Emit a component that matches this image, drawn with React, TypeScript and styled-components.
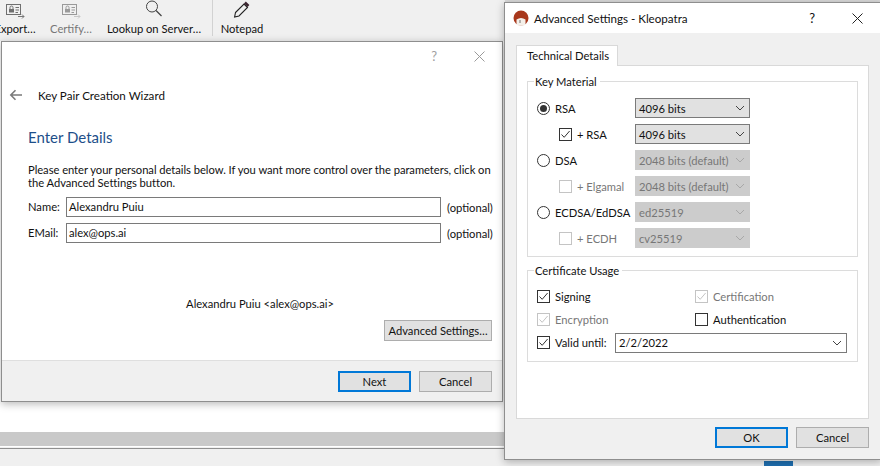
import React from 'react';
import styled, { createGlobalStyle } from 'styled-components';

const GlobalStyle = createGlobalStyle`
  html, body {
    margin: 0;
    padding: 0;
    width: 880px;
    height: 466px;
    overflow: hidden;
    background: #fff;
  }
  * { box-sizing: border-box; }
`;

const Desktop = styled.div`
  position: relative;
  width: 880px;
  height: 466px;
  overflow: hidden;
  background: #fff;
  color: #111;
  font-family: "Lato", "Open Sans", sans-serif;
  font-size: 11.2px;
`;

/* app behind the dialogs */
const Toolbar = styled.div`
  height: 41px;
  background: #f0f0f0;
  display: flex;
  align-items: flex-start;
  overflow: hidden;
`;

const ToolButton = styled.div<{ $width: number; $disabled?: boolean }>`
  width: ${(p) => p.$width}px;
  flex: none;
  display: flex;
  flex-direction: column;
  align-items: center;
  height: 37px;
  color: ${(p) => (p.$disabled ? '#777' : '#111')};
  white-space: nowrap;

  &:first-child { margin-left: -5px; }

  svg { flex: none; height: 20px; }
  span { margin-top: 1px; line-height: 15px; }
`;

const ToolSeparator = styled.div`
  width: 1px;
  height: 36px;
  flex: none;
  background: #d2d2d2;
  margin: 0 4px 0 11px;
`;

const TopEdge = styled.div`
  position: absolute;
  left: 505px;
  right: 0;
  top: 0;
  height: 3px;
  background: #d9d9d9;
`;

const StatusStrip = styled.div`
  position: absolute;
  left: 0;
  right: 0;
  top: 432px;
  height: 34px;
  background: #f0f0f0;
`;

const StatusBand = styled.div`
  height: 15px;
  background: #c9c9c9;
  border-bottom: 1px solid #fff;
`;

const StatusRule = styled.div`
  height: 1px;
  margin-top: 1px;
  background: #8f8f8f;
`;

const TaskChip = styled.div`
  position: absolute;
  left: 764px;
  top: 29px;
  width: 29px;
  height: 5px;
  background: #1f6fb0;
`;

const Window = styled.div<{ $left: number; $top: number; $width: number; $height: number }>`
  position: absolute;
  left: ${(p) => p.$left}px;
  top: ${(p) => p.$top}px;
  width: ${(p) => p.$width}px;
  height: ${(p) => p.$height}px;
  background: #fff;
  border: 1px solid #8e8e8e;
  box-shadow: 0 2px 8px rgba(0, 0, 0, 0.28);
  display: flex;
  flex-direction: column;
`;

/* wizard */
const WizardCaption = styled.div`
  height: 28px;
  display: flex;
  justify-content: flex-end;
  align-items: center;
  gap: 37px;
  padding: 0 17px 0 0;
  color: #a0a0a0;
`;

const HelpMark = styled.span`
  font-size: 13px;
  line-height: 1;
`;

const WizardHeader = styled.div`
  display: flex;
  align-items: center;
  height: 20px;
  margin-top: 15px;
  padding-left: 7px;
  gap: 15px;
  font-size: 11.6px;
`;

const WizardBody = styled.div`
  flex: 1;
  display: flex;
  flex-direction: column;
  padding: 22px 10px 0 26px;
`;

const PageTitle = styled.div`
  font-size: 15px;
  line-height: 20px;
  color: #1d4f8a;
`;

const Intro = styled.p`
  margin: 16px 0 0;
  line-height: 13px;
  letter-spacing: -0.04px;
  white-space: nowrap;
`;

const FieldGrid = styled.div`
  display: grid;
  grid-template-columns: 38px 375px auto;
  row-gap: 6px;
  align-items: center;
  margin-top: 8px;
`;

const FieldLabel = styled.span`
  line-height: 20px;
`;

const TextField = styled.div`
  height: 20px;
  border: 1px solid #7a7a7a;
  padding-left: 2px;
  line-height: 18px;
`;

const FieldHint = styled.span`
  margin-left: 6px;
`;

const Preview = styled.div`
  margin-top: 53px;
  text-align: center;
  line-height: 15px;
`;

const AdvancedRow = styled.div`
  display: flex;
  justify-content: flex-end;
  margin-top: 9px;
`;

const PushButton = styled.div<{ $width: number; $default?: boolean }>`
  width: ${(p) => p.$width}px;
  height: 21px;
  flex: none;
  display: flex;
  align-items: center;
  justify-content: center;
  background: #e1e1e1;
  border: ${(p) => (p.$default ? '2px solid #0078d7' : '1px solid #adadad')};
  white-space: nowrap;
`;

const ButtonBar = styled.div<{ $height: number; $rule?: boolean; $inset: number; $lift?: number }>`
  height: ${(p) => p.$height}px;
  flex: none;
  display: flex;
  justify-content: flex-end;
  align-items: center;
  gap: 8px;
  background: #f0f0f0;
  border-top: ${(p) => (p.$rule ? '1px solid #dfdfdf' : 'none')};
  padding: 0 ${(p) => p.$inset}px ${(p) => p.$lift ?? 0}px 0;
`;

/* advanced settings */
const TitleBar = styled.div`
  height: 30px;
  flex: none;
  display: flex;
  align-items: center;
  padding: 0 18px 0 8px;
  font-size: 11.6px;
`;

const TitleText = styled.span`
  margin-left: 5px;
  flex: 1;
`;

const TitleHelp = styled.span`
  font-size: 13px;
  margin-right: 37px;
`;

const DialogBody = styled.div`
  flex: 1;
  display: flex;
  flex-direction: column;
  background: #f0f0f0;
  padding: 12px 12px 0 11px;
`;

const Tab = styled.div`
  width: 102px;
  height: 21px;
  margin-bottom: -1px;
  position: relative;
  z-index: 1;
  background: #fff;
  border: 1px solid #d9d9d9;
  border-bottom: none;
  padding-left: 10px;
  line-height: 20px;
`;

const TabPane = styled.div`
  height: 354px;
  flex: none;
  background: #fff;
  border: 1px solid #d9d9d9;
  padding: 15px 10px 0 10px;
  display: flex;
  flex-direction: column;
  gap: 13px;
`;

const GroupBox = styled.fieldset<{ $height: number }>`
  margin: 0;
  padding: 0;
  min-width: 0;
  height: ${(p) => p.$height}px;
  flex: none;
  border: 1px solid #dcdcdc;
  position: relative;
  display: flex;
  flex-direction: column;
`;

const GroupTitle = styled.div`
  position: absolute;
  top: -7px;
  left: 6px;
  padding: 0 3px 0 1px;
  line-height: 14px;
  background: #fff;
`;

const KeyGrid = styled.div`
  display: grid;
  grid-template-columns: 98px 115px;
  grid-auto-rows: 20px;
  row-gap: 6px;
  padding: 16px 0 0 9px;
  align-items: center;
`;

const OptionLine = styled.div<{ $indent?: boolean; $disabled?: boolean }>`
  display: flex;
  align-items: center;
  padding-left: ${(p) => (p.$indent ? 22 : 0)}px;
  color: ${(p) => (p.$disabled ? '#777' : '#111')};
  white-space: nowrap;
`;

const RadioDot = styled.span<{ $checked?: boolean }>`
  width: 13px;
  height: 13px;
  flex: none;
  margin-right: 5px;
  border: 1px solid #333;
  border-radius: 50%;
  display: flex;
  align-items: center;
  justify-content: center;

  &::after {
    content: '';
    width: 7px;
    height: 7px;
    border-radius: 50%;
    background: ${(p) => (p.$checked ? '#333' : 'transparent')};
  }
`;

const CheckBox = styled.span<{ $disabled?: boolean }>`
  width: 13px;
  height: 13px;
  flex: none;
  margin-right: 5px;
  background: #fff;
  border: 1px solid ${(p) => (p.$disabled ? '#c4c4c4' : '#333')};
  display: flex;
  align-items: center;
  justify-content: center;

  svg { display: block; }
`;

const ComboBox = styled.div<{ $disabled?: boolean; $white?: boolean; $grow?: boolean }>`
  height: 20px;
  display: flex;
  align-items: center;
  justify-content: space-between;
  padding: 0 4px 0 3px;
  background: ${(p) => (p.$white ? '#fff' : p.$disabled ? '#cccccc' : '#e1e1e1')};
  border: 1px solid ${(p) => (p.$disabled ? '#cccccc' : '#7a7a7a')};
  color: ${(p) => (p.$disabled ? '#777' : '#111')};
  flex: ${(p) => (p.$grow ? 1 : 'none')};
`;

const UsageGrid = styled.div`
  display: grid;
  grid-template-columns: 158px 1fr;
  grid-auto-rows: 23px;
  padding: 14px 10px 0 9px;
  align-items: center;
`;

const ValidRow = styled.div`
  grid-column: 1 / 3;
  display: flex;
  align-items: center;
`;

const ValidLabel = styled.span`
  width: 60px;
  flex: none;
  white-space: nowrap;
`;

const Check = ({ disabled }: { disabled?: boolean }) => (
  <svg width="11" height="11" viewBox="0 0 11 11" fill="none">
    <path d="M1.5 5.5 L4.2 8.3 L9.6 2" stroke={disabled ? '#c4c4c4' : '#333'} strokeWidth="1" />
  </svg>
);

const Chevron = ({ disabled }: { disabled?: boolean }) => (
  <svg width="10" height="6" viewBox="0 0 10 6" fill="none">
    <path d="M1 1 L5 5 L9 1" stroke={disabled ? '#a8a8a8' : '#444'} strokeWidth="1" />
  </svg>
);

const CertIcon = ({ disabled }: { disabled?: boolean }) => {
  const c = disabled ? '#9a9a9a' : '#6f6f6f';
  return (
    <svg width="20" height="20" viewBox="0 0 20 20" fill="none">
      <rect x="1.5" y="4.5" width="14" height="10" stroke={c} />
      <rect x="4" y="9" width="5" height="3.5" fill={c} />
      <path d="M5 9 V7.5 a1.5 1.5 0 0 1 3 0 V9" stroke={c} />
      <path d="M10.5 7.5 H14 M10.5 10 H14 M10.5 12.5 H13" stroke={c} />
      <path d="M13 16.5 H19 M17 14.5 L19 16.5 L17 18.5" stroke={disabled ? '#c8c8c8' : '#777'} />
    </svg>
  );
};

const SearchIcon = () => (
  <svg width="20" height="20" viewBox="0 0 20 20" fill="none" stroke="#444">
    <circle cx="8" cy="6.5" r="5.5" />
    <path d="M12 10.5 L17.5 16" strokeWidth="1.2" />
  </svg>
);

const PencilIcon = () => (
  <svg width="20" height="20" viewBox="0 0 20 20" fill="none">
    <path d="M3.5 12.5 L12 4 L15.5 7.5 L7 16 L2.6 17 Z" stroke="#222" strokeWidth="1.1" />
    <path d="M12 3.6 L13.8 1.6 L17.4 5 L15.6 7 Z" fill="#3b2430" />
  </svg>
);

const BackArrow = () => (
  <svg width="14" height="12" viewBox="0 0 14 12" fill="none" stroke="#7a7a7a" strokeWidth="1.6">
    <path d="M13 6 H2 M6.5 1.2 L1.8 6 L6.5 10.8" />
  </svg>
);

const CloseGlyph = ({ color }: { color: string }) => (
  <svg width="11" height="11" viewBox="0 0 11 11" fill="none" stroke={color} strokeWidth="1">
    <path d="M0.5 0.5 L10.5 10.5 M10.5 0.5 L0.5 10.5" />
  </svg>
);

const KleopatraLogo = () => (
  <svg width="16" height="16" viewBox="0 0 16 16">
    <circle cx="8" cy="8" r="7.5" fill="#a8381c" />
    <path d="M3.5 15 V9.5 Q8 6.5 12.5 9.5 V15 Q8 16.5 3.5 15 Z" fill="#f4f0ea" />
    <path d="M7 10 V13" stroke="#555" strokeWidth="0.8" />
  </svg>
);

export default function App() {
  return (
    <Desktop>
      <GlobalStyle />
      <Toolbar>
        <ToolButton $width={40}>
          <CertIcon />
          <span>Export…</span>
        </ToolButton>
        <ToolButton $width={72} $disabled>
          <CertIcon disabled />
          <span>Certify…</span>
        </ToolButton>
        <ToolButton $width={94}>
          <SearchIcon />
          <span>Lookup on Server…</span>
        </ToolButton>
        <ToolSeparator />
        <ToolButton $width={50}>
          <PencilIcon />
          <span>Notepad</span>
        </ToolButton>
      </Toolbar>
      <TopEdge />

      <StatusStrip>
        <StatusBand />
        <StatusRule />
        <TaskChip />
      </StatusStrip>

      <Window $left={1} $top={41} $width={502} $height={361}>
        <WizardCaption>
          <HelpMark>?</HelpMark>
          <CloseGlyph color="#9a9a9a" />
        </WizardCaption>
        <WizardHeader>
          <BackArrow />
          Key Pair Creation Wizard
        </WizardHeader>
        <WizardBody>
          <PageTitle>Enter Details</PageTitle>
          <Intro>
            Please enter your personal details below. If you want more control over the parameters, click on
            <br />
            the Advanced Settings button.
          </Intro>
          <FieldGrid>
            <FieldLabel>Name:</FieldLabel>
            <TextField>Alexandru Puiu</TextField>
            <FieldHint>(optional)</FieldHint>
            <FieldLabel>EMail:</FieldLabel>
            <TextField>alex@ops.ai</TextField>
            <FieldHint>(optional)</FieldHint>
          </FieldGrid>
          <Preview>Alexandru Puiu &lt;alex@ops.ai&gt;</Preview>
          <AdvancedRow>
            <PushButton $width={108}>Advanced Settings…</PushButton>
          </AdvancedRow>
        </WizardBody>
        <ButtonBar $height={41} $rule $inset={10}>
          <PushButton $width={73} $default>Next</PushButton>
          <PushButton $width={73}>Cancel</PushButton>
        </ButtonBar>
      </Window>

      <Window $left={504} $top={2} $width={378} $height={458}>
        <TitleBar>
          <KleopatraLogo />
          <TitleText>Advanced Settings - Kleopatra</TitleText>
          <TitleHelp>?</TitleHelp>
          <CloseGlyph color="#222" />
        </TitleBar>
        <DialogBody>
          <Tab>Technical Details</Tab>
          <TabPane>
            <GroupBox $height={176}>
              <GroupTitle>Key Material</GroupTitle>
              <KeyGrid>
                <OptionLine><RadioDot $checked />RSA</OptionLine>
                <ComboBox>4096 bits<Chevron /></ComboBox>
                <OptionLine $indent><CheckBox><Check /></CheckBox>+ RSA</OptionLine>
                <ComboBox>4096 bits<Chevron /></ComboBox>
                <OptionLine><RadioDot />DSA</OptionLine>
                <ComboBox $disabled>2048 bits (default)<Chevron disabled /></ComboBox>
                <OptionLine $indent $disabled><CheckBox $disabled />+ Elgamal</OptionLine>
                <ComboBox $disabled>2048 bits (default)<Chevron disabled /></ComboBox>
                <OptionLine><RadioDot />ECDSA/EdDSA</OptionLine>
                <ComboBox $disabled>ed25519<Chevron disabled /></ComboBox>
                <OptionLine $indent $disabled><CheckBox $disabled />+ ECDH</OptionLine>
                <ComboBox $disabled>cv25519<Chevron disabled /></ComboBox>
              </KeyGrid>
            </GroupBox>
            <GroupBox $height={92}>
              <GroupTitle>Certificate Usage</GroupTitle>
              <UsageGrid>
                <OptionLine><CheckBox><Check /></CheckBox>Signing</OptionLine>
                <OptionLine $disabled><CheckBox $disabled><Check disabled /></CheckBox>Certification</OptionLine>
                <OptionLine $disabled><CheckBox $disabled><Check disabled /></CheckBox>Encryption</OptionLine>
                <OptionLine><CheckBox />Authentication</OptionLine>
                <ValidRow>
                  <OptionLine><CheckBox><Check /></CheckBox><ValidLabel>Valid until:</ValidLabel></OptionLine>
                  <ComboBox $white $grow>2/2/2022<Chevron /></ComboBox>
                </ValidRow>
              </UsageGrid>
            </GroupBox>
          </TabPane>
          <ButtonBar $height={40} $inset={0} $lift={3}>
            <PushButton $width={73} $default>OK</PushButton>
            <PushButton $width={73}>Cancel</PushButton>
          </ButtonBar>
        </DialogBody>
      </Window>
    </Desktop>
  );
}
